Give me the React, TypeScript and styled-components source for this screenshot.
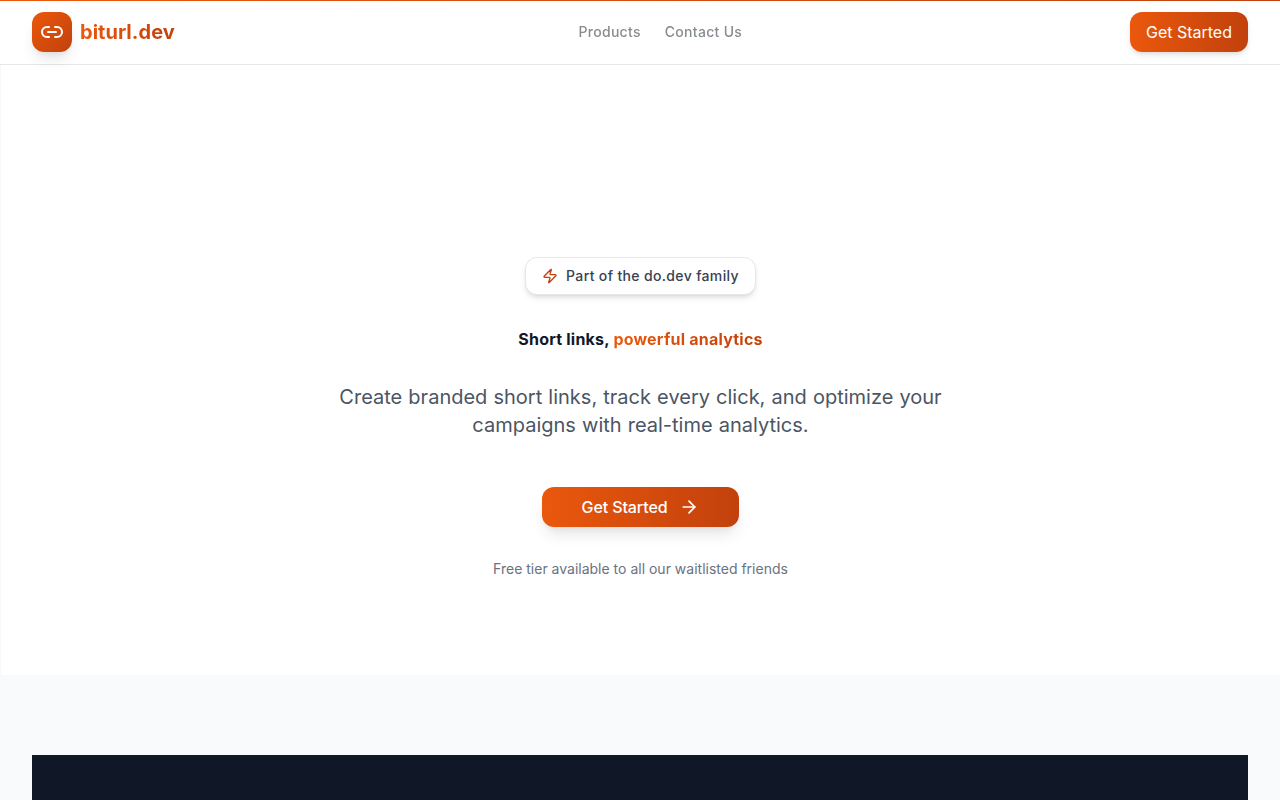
import { createGlobalStyle, styled } from 'styled-components';
import { ArrowRight, Link2, Zap } from 'lucide-react';

const GlobalStyle = createGlobalStyle`
  html, body {
    margin: 0;
    padding: 0;
    background: #f9fafb;
    font-family: Inter, "Liberation Sans", sans-serif;
    height: 800px;
    overflow: hidden;
  }
  * {
    box-sizing: border-box;
  }
`;

const Page = styled.div`
  width: 1280px;
  height: 800px;
  overflow: hidden;
  background: #f9fafb;
`;

const Header = styled.header`
  position: relative;
  height: 65px;
  display: flex;
  justify-content: space-between;
  align-items: center;
  padding: 0 32px;
  background: #fff;
  border-bottom: 1px solid #e5e7eb;
`;

const TopLine = styled.div`
  position: absolute;
  top: 0;
  left: 0;
  right: 0;
  height: 1px;
  background: linear-gradient(90deg, #ea580c, #c2410c);
`;

const Brand = styled.div`
  display: flex;
  align-items: center;
  gap: 8px;
  margin-right: 16px;
`;

const LogoMark = styled.div`
  width: 40px;
  height: 40px;
  border-radius: 12px;
  display: flex;
  align-items: center;
  justify-content: center;
  color: #fff;
  background: linear-gradient(135deg, #ea580c, #c2410c);
  box-shadow: 0 10px 15px -3px rgba(0, 0, 0, 0.1), 0 4px 6px -4px rgba(0, 0, 0, 0.1);
`;

const BrandName = styled.span`
  font-size: 20px;
  line-height: 28px;
  font-weight: 700;
  letter-spacing: 0.02px;
  background: linear-gradient(90deg, #ea580c, #c2410c);
  -webkit-background-clip: text;
  background-clip: text;
  color: transparent;
`;

const Nav = styled.nav`
  display: flex;
  gap: 24px;
`;

const NavLink = styled.a`
  font-size: 14px;
  line-height: 20px;
  font-weight: 500;
  letter-spacing: 0.3px;
  color: #6a7075;
  opacity: 0.8;
`;

const HeaderButton = styled.button`
  height: 40px;
  padding: 0 16px;
  border: 0;
  border-radius: 12px;
  font-family: inherit;
  font-size: 16px;
  font-weight: 400;
  color: #fff;
  background: linear-gradient(90deg, #ea580c, #c2410c);
  box-shadow: 0 4px 6px -1px rgba(0, 0, 0, 0.1), 0 2px 4px -2px rgba(0, 0, 0, 0.1);
`;

const Hero = styled.main`
  height: 610px;
  padding-top: 192px;
  display: flex;
  flex-direction: column;
  align-items: center;
  background: #fff;
  border-left: 1px solid #f8f8f8;
`;

const FamilyBadge = styled.div`
  height: 38px;
  display: flex;
  align-items: center;
  gap: 8px;
  padding: 0 16px;
  border: 1px solid #e5e7eb;
  border-radius: 12px;
  background: #fff;
  box-shadow: 0 4px 6px -1px rgba(0, 0, 0, 0.1), 0 2px 4px -2px rgba(0, 0, 0, 0.1);
  svg {
    color: #c2410c;
  }
`;

const BadgeLabel = styled.span`
  margin-top: -2px;
  font-size: 14px;
  font-weight: 500;
  letter-spacing: 0.35px;
  color: #374151;
`;

const Headline = styled.h1`
  margin: 32px 0 0;
  font-size: 16px;
  line-height: 24px;
  font-weight: 700;
  letter-spacing: 0.22px;
  color: #111827;
`;

const Accent = styled.span`
  background: linear-gradient(90deg, #ea580c, #c2410c);
  -webkit-background-clip: text;
  background-clip: text;
  color: transparent;
`;

const Lead = styled.p`
  margin: 32px 0 0;
  width: 672px;
  text-align: center;
  font-size: 20px;
  line-height: 28px;
  font-weight: 400;
  word-spacing: 0.5px;
  color: #4b5563;
`;

const HeroButton = styled.button`
  margin-top: 48px;
  height: 40px;
  padding: 0 40px;
  display: flex;
  align-items: center;
  gap: 12px;
  border: 0;
  border-radius: 12px;
  font-family: inherit;
  font-size: 16px;
  font-weight: 500;
  letter-spacing: -0.1px;
  color: #fff;
  background: linear-gradient(90deg, #ea580c, #c2410c);
  box-shadow: 0 10px 15px -3px rgba(0, 0, 0, 0.1), 0 4px 6px -4px rgba(0, 0, 0, 0.1);
`;

const Note = styled.p`
  margin: 32px 0 0;
  font-size: 14px;
  line-height: 20px;
  color: #6b7280;
`;

const Showcase = styled.section`
  padding: 80px 32px 0;
`;

const DarkPanel = styled.div`
  height: 400px;
  background: #101828;
`;

export default function App() {
  return (
    <Page>
      <GlobalStyle />
      <Header>
        <TopLine />
        <Brand>
          <LogoMark>
            <Link2 size={24} strokeWidth={2} />
          </LogoMark>
          <BrandName>biturl.dev</BrandName>
        </Brand>
        <Nav>
          <NavLink>Products</NavLink>
          <NavLink>Contact Us</NavLink>
        </Nav>
        <HeaderButton>Get Started</HeaderButton>
      </Header>
      <Hero>
        <FamilyBadge>
          <Zap size={16} strokeWidth={2} />
          <BadgeLabel>Part of the do.dev family</BadgeLabel>
        </FamilyBadge>
        <Headline>
          Short links, <Accent>powerful analytics</Accent>
        </Headline>
        <Lead>
          Create branded short links, track every click, and optimize your campaigns with real-time
          analytics.
        </Lead>
        <HeroButton>
          Get Started
          <ArrowRight size={20} strokeWidth={2} />
        </HeroButton>
        <Note>Free tier available to all our waitlisted friends</Note>
      </Hero>
      <Showcase>
        <DarkPanel />
      </Showcase>
    </Page>
  );
}
